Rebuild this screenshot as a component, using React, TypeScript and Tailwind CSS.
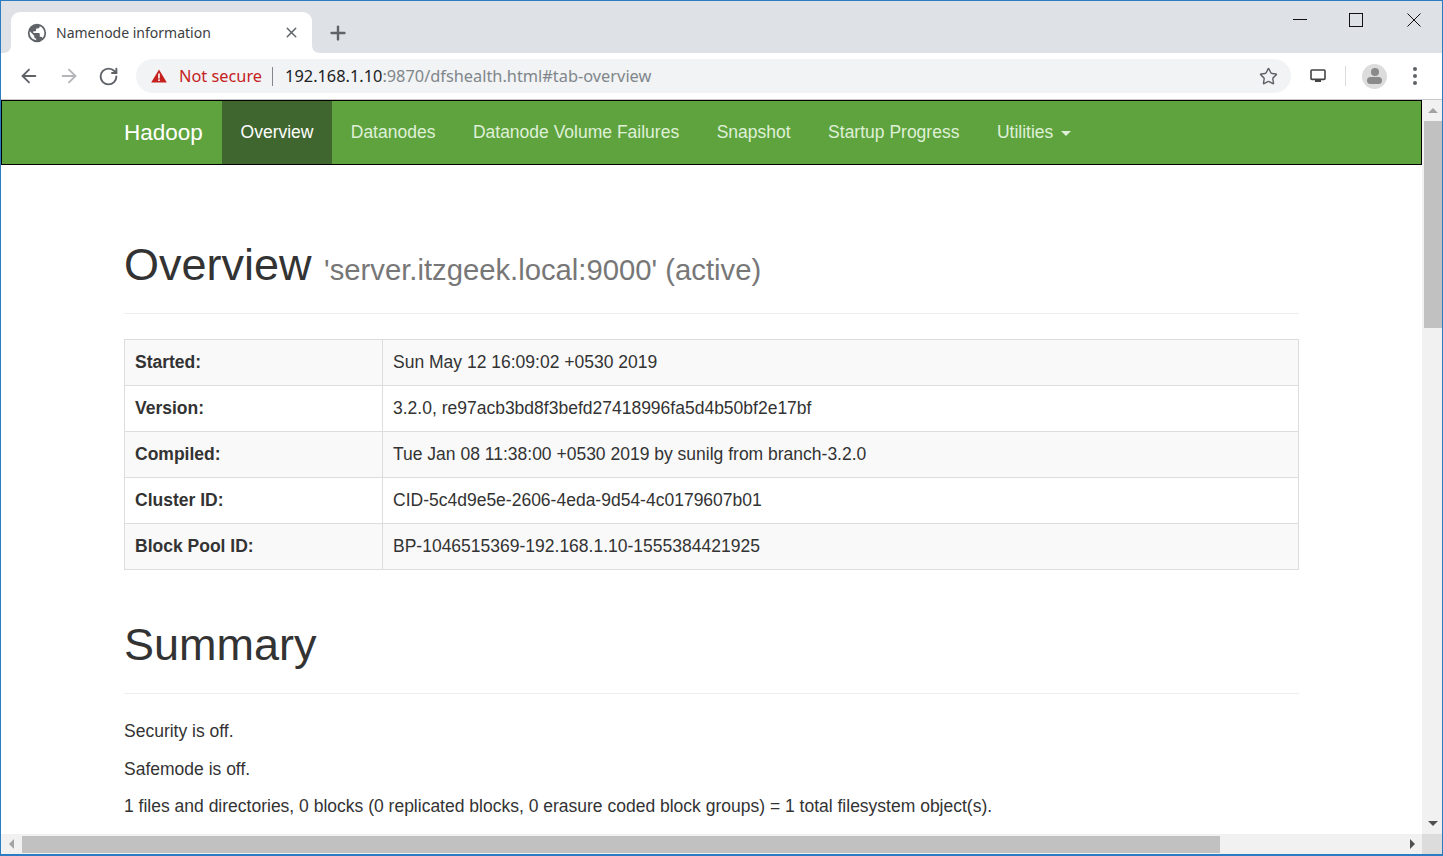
import { ArrowLeft, ArrowRight, RotateCw, Star, X, Plus } from "lucide-react";

const NAV_ITEMS = ["Datanodes", "Datanode Volume Failures", "Snapshot", "Startup Progress"];

const OVERVIEW_ROWS = [
  ["Started:", "Sun May 12 16:09:02 +0530 2019"],
  ["Version:", "3.2.0, re97acb3bd8f3befd27418996fa5d4b50bf2e17bf"],
  ["Compiled:", "Tue Jan 08 11:38:00 +0530 2019 by sunilg from branch-3.2.0"],
  ["Cluster ID:", "CID-5c4d9e5e-2606-4eda-9d54-4c0179607b01"],
  ["Block Pool ID:", "BP-1046515369-192.168.1.10-1555384421925"],
];

function GlobeIcon() {
  return (
    <svg width="22" height="22" viewBox="0 0 24 24" fill="#5f6368">
      <path d="M12 2a10 10 0 1 0 0 20 10 10 0 0 0 0-20zm-1 17.9A8 8 0 0 1 4.2 10.2L9 15v1a2 2 0 0 0 2 2v1.9zm6.9-2.5A2 2 0 0 0 16 16h-1v-3a1 1 0 0 0-1-1H8v-2h2a1 1 0 0 0 1-1V7h2a2 2 0 0 0 2-2v-.4a8 8 0 0 1 2.9 12.8z" />
    </svg>
  );
}

function TabFlare({ side }: { side: "left" | "right" }) {
  return (
    <svg
      width="8"
      height="8"
      viewBox="0 0 8 8"
      className={side === "left" ? "absolute bottom-0 -left-[8px]" : "absolute bottom-0 -right-[8px] -scale-x-100"}
    >
      <path d="M8 0V8H0C5 8 8 5 8 0z" fill="#fff" />
    </svg>
  );
}

function WindowControls() {
  return (
    <div className="self-start pt-[12px] flex items-start mr-[21px]">
      <svg width="14" height="14" viewBox="0 0 14 14"><path d="M0 6.5H14" stroke="#111" strokeWidth="1" /></svg>
      <svg width="14" height="14" viewBox="0 0 14 14" className="ml-[42px]"><rect x="0.5" y="0.5" width="13" height="13" fill="none" stroke="#111" strokeWidth="1" /></svg>
      <svg width="14" height="14" viewBox="0 0 14 14" className="ml-[44px]"><path d="M0.5 0.5L13.5 13.5M13.5 0.5L0.5 13.5" stroke="#111" strokeWidth="1" /></svg>
    </div>
  );
}

function TitleBar() {
  return (
    <div className="h-[52px] flex items-end bg-[#dee1e6] shrink-0">
      <div className="relative ml-[10px] w-[301px] h-[41px] bg-white rounded-t-[9px] flex items-center pl-[15px] pr-[12px]">
        <TabFlare side="left" />
        <TabFlare side="right" />
        <GlobeIcon />
        <span className="ml-[8px] flex-1 text-[14px] text-[#3c4043] font-['Noto_Sans',sans-serif]">Namenode information</span>
        <X size={17} strokeWidth={2} className="text-[#5f6368]" />
      </div>
      <div className="ml-[15px] h-[41px] flex items-center">
        <Plus size={22} strokeWidth={2.6} className="text-[#5f6368]" />
      </div>
      <div className="flex-1" />
      <WindowControls />
    </div>
  );
}

function Toolbar() {
  return (
    <div className="h-[47px] flex items-center bg-white border-b border-[#c8c8c8] shrink-0">
      <ArrowLeft size={22} strokeWidth={2} className="ml-[17px] text-[#5f6368]" />
      <ArrowRight size={22} strokeWidth={2} className="ml-[18px] text-[#b4b6b9]" />
      <RotateCw size={21} strokeWidth={2.2} className="ml-[18px] text-[#5f6368]" />
      <div className="ml-[17px] w-[1155px] h-[34px] rounded-full bg-[#f1f3f4] flex items-center pl-[15px] pr-[13px] text-[16.35px] font-['Noto_Sans',sans-serif]">
        <svg width="16" height="14" viewBox="0 0 16 14"><path d="M8 0.5L15.8 13.5H0.2z" fill="#c5221f" /><rect x="7.2" y="4.5" width="1.6" height="5" fill="#fff" /><rect x="7.2" y="10.3" width="1.6" height="1.7" fill="#fff" /></svg>
        <span className="ml-[12px] text-[#c5221f]">Not secure</span>
        <span className="ml-[10px] w-[1px] h-[19px] bg-[#80868b]" />
        <span className="ml-[12px] text-[#202124]">192.168.1.10</span>
        <span className="text-[#80868b]">:9870/dfshealth.html#tab-overview</span>
        <Star size={19} strokeWidth={1.8} className="ml-auto text-[#5f6368]" />
      </div>
      <svg width="16" height="14" viewBox="0 0 16 14" className="ml-[19px]"><rect x="1" y="1" width="14" height="9.4" rx="1" fill="none" stroke="#444" strokeWidth="1.6" /><rect x="5" y="11" width="6" height="2" fill="#444" /></svg>
      <span className="ml-[19px] w-[1px] h-[20px] bg-[#dadce0]" />
      <div className="ml-[16px] w-[25px] h-[25px] rounded-full bg-[#dcdcdc] flex flex-col items-center justify-center">
        <span className="w-[8px] h-[8px] rounded-full bg-[#8a8a8a]" />
        <span className="mt-[1px] w-[15px] h-[7px] rounded-full bg-[#8a8a8a]" />
      </div>
      <div className="ml-[26px] flex flex-col gap-[3px]">
        <span className="w-[4px] h-[4px] rounded-full bg-[#5f6368]" />
        <span className="w-[4px] h-[4px] rounded-full bg-[#5f6368]" />
        <span className="w-[4px] h-[4px] rounded-full bg-[#5f6368]" />
      </div>
    </div>
  );
}

function Navbar() {
  return (
    <nav className="h-[65px] bg-[#5fa33e] border border-black flex text-[17.5px] text-[#dff0d8] shrink-0">
      <span className="ml-[122px] w-[98px] leading-[63px] text-[22.5px] text-white">Hadoop</span>
      <span className="w-[110px] text-center leading-[63px] bg-[#3f662e] text-white">Overview</span>
      {NAV_ITEMS.map((item) => (
        <span key={item} className="mx-[18.75px] leading-[63px]">{item}</span>
      ))}
      <span className="ml-[18.75px] leading-[63px] flex items-center">
        Utilities
        <span className="ml-[8px] mt-[2px] border-x-[5px] border-t-[5px] border-x-transparent border-t-[#dff0d8]" />
      </span>
    </nav>
  );
}

function Content() {
  return (
    <div className="ml-[123px] w-[1175px] text-[#333] text-[17.5px]">
      <div className="mt-[74px] pb-[13px] border-b border-[#eee] leading-[52px]">
        <span className="text-[45px]">Overview</span>
        <span className="ml-[12.5px] text-[29.25px] text-[#777]">'server.itzgeek.local:9000' (active)</span>
      </div>
      <table className="mt-[25px] w-full border-collapse border border-[#ddd]">
        <tbody>
          {OVERVIEW_ROWS.map(([label, value], i) => (
            <tr key={label} className={i % 2 === 0 ? "bg-[#f9f9f9]" : "bg-white"}>
              <th className="w-[258px] h-[46px] border border-[#ddd] px-[10px] text-left font-bold">{label}</th>
              <td className="h-[46px] border border-[#ddd] px-[10px]">{value}</td>
            </tr>
          ))}
        </tbody>
      </table>
      <div className="mt-[49px] pb-[22px] border-b border-[#eee] text-[45px] leading-[52px]">Summary</div>
      <p className="mt-[25px] leading-[25px]">Security is off.</p>
      <p className="mt-[12.5px] leading-[25px]">Safemode is off.</p>
      <p className="mt-[12.5px] leading-[25px]">1 files and directories, 0 blocks (0 replicated blocks, 0 erasure coded block groups) = 1 total filesystem object(s).</p>
    </div>
  );
}

export default function App() {
  return (
    <div className="w-[1443px] h-[856px] flex flex-col overflow-hidden border border-[#2b7cc0] border-b-[2px] bg-white font-['Liberation_Sans',Arial,sans-serif]">
      <TitleBar />
      <Toolbar />
      <div className="flex-1 flex min-h-0">
        <main className="flex-1 min-w-0 overflow-hidden">
          <Navbar />
          <Content />
        </main>
        <div className="w-[20px] bg-[#f1f1f1] flex flex-col pl-[2px] shrink-0">
          <div className="h-[21px] flex items-center justify-center">
            <span className="border-x-[5px] border-b-[5px] border-x-transparent border-b-[#a3a3a3]" />
          </div>
          <div className="w-full h-[207px] bg-[#c1c1c1]" />
          <div className="flex-1" />
          <div className="h-[22px] flex items-center justify-center">
            <span className="border-x-[5px] border-t-[5px] border-x-transparent border-t-[#505050]" />
          </div>
        </div>
      </div>
      <div className="h-[20px] flex bg-[#f1f1f1] shrink-0">
        <div className="w-[21px] flex items-center justify-center">
          <span className="border-y-[5px] border-r-[5px] border-y-transparent border-r-[#a3a3a3]" />
        </div>
        <div className="w-[1198px] bg-[#c1c1c1] mt-[2px] mb-[1px]" />
        <div className="flex-1 flex items-center justify-end pr-[7px]">
          <span className="border-y-[5px] border-l-[5px] border-y-transparent border-l-[#505050]" />
        </div>
        <div className="w-[20px] bg-[#dcdcdc]" />
      </div>
    </div>
  );
}
